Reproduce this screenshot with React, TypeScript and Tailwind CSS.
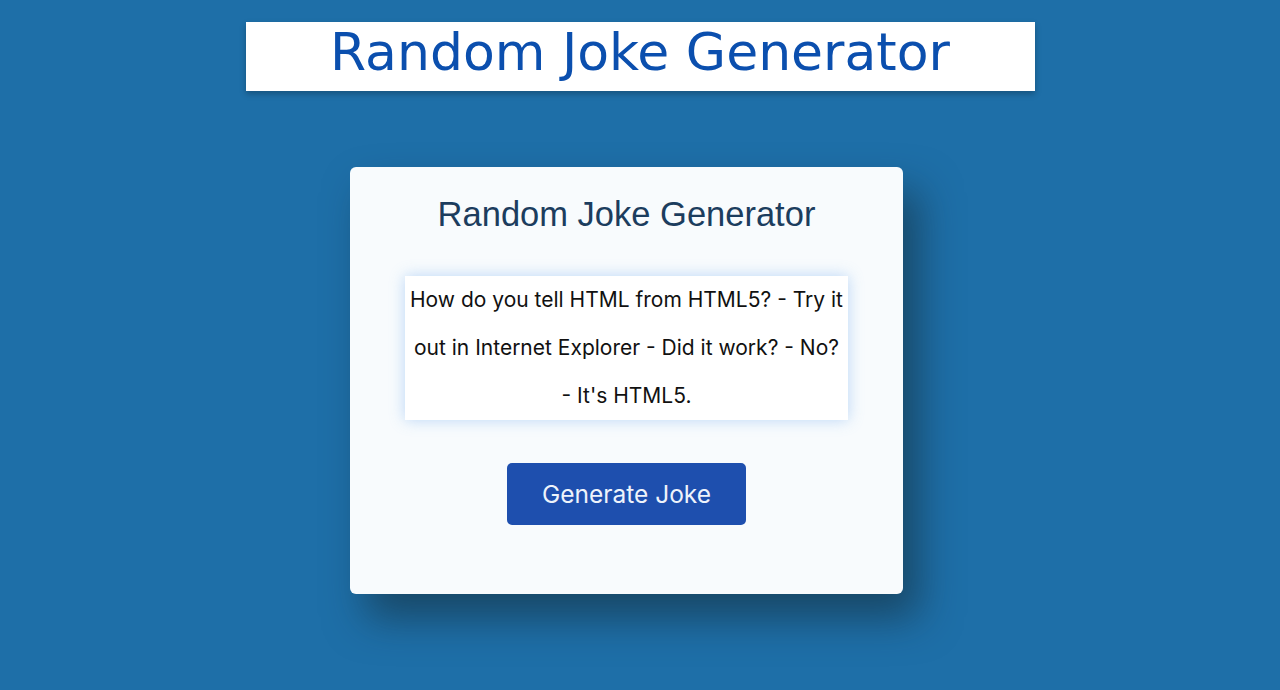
export default function App() {
  return (
    <div className="min-h-[690px] bg-[#1e6fa8] pt-[22px]">
      <header className="mx-auto w-[789px] h-[69px] pb-[9px] bg-white shadow-[0_3px_6px_rgba(0,0,0,0.25)] flex items-center justify-center">
        <h1 className="text-[52px] leading-none text-[#0b4fae] font-['DejaVu_Sans',sans-serif]">
          Random Joke Generator
        </h1>
      </header>

      <div className="mt-[76px] ml-[350px] w-[553px] h-[427px] bg-[#f8fbfd] rounded-md shadow-[16px_24px_40px_rgba(20,40,50,0.55)] flex flex-col items-center pt-[27px]">
        <h2 className="text-[34.5px] leading-[40px] text-[#1c3d5e] font-['Liberation_Sans',sans-serif]">
          Random Joke Generator
        </h2>

        <div className="mt-[42px] w-[443px] h-[144px] bg-white shadow-[0_0_14px_rgba(110,170,240,0.45)] text-center">
          <p className="text-[21px] leading-[48px] text-[#111] font-['Inter',sans-serif]">
            How do you tell HTML from HTML5? - Try it out in Internet Explorer - Did it work? - No?{" "}
            <span className="whitespace-nowrap">- It's</span> HTML5.
          </p>
        </div>

        <button className="mt-[43px] w-[239px] h-[62px] rounded-[5px] bg-[#1e4fae] text-[#eef3fb] text-[24.5px] font-['Inter',sans-serif]">
          Generate Joke
        </button>
      </div>
    </div>
  );
}
